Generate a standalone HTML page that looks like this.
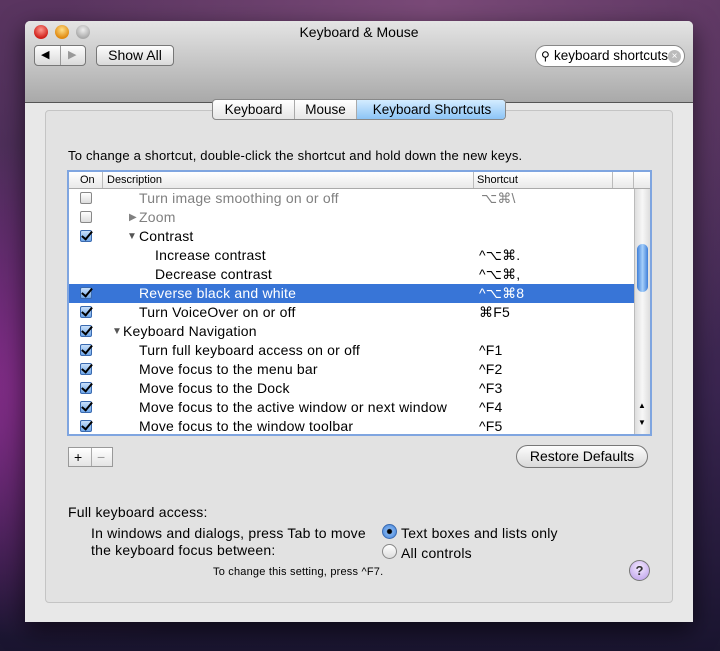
<!DOCTYPE html>
<html><head><meta charset="utf-8"><style>
*{margin:0;padding:0;box-sizing:border-box}
body{width:720px;height:651px;overflow:hidden;position:relative;font-family:"Liberation Sans",sans-serif;font-size:13px;color:#000;
background:radial-gradient(ellipse at 10% 60%,#8a2d8e 0%,transparent 45%),radial-gradient(ellipse at 60% 0%,#7a4a78 0%,transparent 60%),linear-gradient(180deg,#5a3560 0%,#3a2550 60%,#1a1530 100%);}
.a{position:absolute;white-space:nowrap}
.win{position:absolute;left:25px;top:21px;width:668px;height:601px;background:#e8e8e8;border-radius:5px 5px 0 0;box-shadow:0 8px 25px rgba(0,0,0,.6);overflow:hidden}
.tb{position:absolute;left:0;top:0;width:668px;height:82px;background:linear-gradient(#e4e4e4,#a9a9a9);border-bottom:1px solid #555}
.light{position:absolute;top:4px;width:14px;height:14px;border-radius:50%}
.btn{position:absolute;background:linear-gradient(#fdfdfd,#d9d9d9);border:1px solid #777;border-radius:4px;font-size:14px;text-align:center}
.group{position:absolute;left:20px;top:89px;width:628px;height:493px;border:1px solid #c4c4c4;border-radius:4px;background:#e2e2e2}
.table{position:absolute;left:67px;top:170px;width:585px;height:266px;border:2px solid #7fa5e0;background:#fff;overflow:hidden}
.hdr{position:absolute;left:0;top:0;width:581px;height:17px;background:linear-gradient(#fff,#e9e9e9);border-bottom:1px solid #aaa;font-size:11px}
.row{position:absolute;left:0;width:565px;height:19px;font-size:14px;letter-spacing:.2px}
.cb{position:absolute;left:11px;top:3px;width:12px;height:12px;border:1px solid #888;border-radius:2px;background:linear-gradient(#fff,#ddd)}
.cb.on{background:linear-gradient(#c9e0fa,#6fa6e8);border-color:#3a6ab0}
.cb.on::after{content:"";position:absolute;left:3px;top:-2px;width:4px;height:9px;border:solid #000;border-width:0 2px 2px 0;transform:rotate(40deg)}
.t{position:absolute;top:1px}
.s{position:absolute;left:410px;top:1px}
.bt{font-size:14px;letter-spacing:.2px}
</style></head><body>
<div class="win">
 <div class="tb">
  <div class="light" style="left:9px;background:radial-gradient(circle at 50% 35%,#ff9a90,#d0201a 70%)"></div>
  <div class="light" style="left:30px;background:radial-gradient(circle at 50% 35%,#ffe08a,#e08a10 70%)"></div>
  <div class="light" style="left:51px;background:radial-gradient(circle at 50% 35%,#eee,#aaa 70%)"></div>
  <div class="a" style="left:0;width:668px;text-align:center;top:3px;font-size:14px">Keyboard &amp; Mouse</div>
  <div class="btn" style="left:9px;top:24px;width:52px;height:21px"><span class="a" style="left:6px;top:2px;font-size:11px">◀</span><span style="position:absolute;left:25px;top:0;height:19px;border-left:1px solid #999"></span><span class="a" style="left:33px;top:2px;font-size:11px;color:#999">▶</span></div>
  <div class="btn" style="left:71px;top:24px;width:78px;height:21px;line-height:19px">Show All</div>
  <div class="a" style="left:510px;top:24px;width:150px;height:22px;background:#fff;border:1px solid #888;border-radius:11px;font-size:13.5px;line-height:20px;padding-left:18px">keyboard shortcuts
   <span class="a" style="left:5px;top:0;font-size:12px">⚲</span>
   <span class="a" style="left:132px;top:4px;width:13px;height:13px;border-radius:50%;background:#bbb;color:#fff;font-size:10px;line-height:13px;text-align:center">×</span></div>
 </div>
 <div class="group"></div>
 <div class="a" style="left:187px;top:78px;width:294px;height:21px;border:1px solid #888;border-radius:4px;background:linear-gradient(#fff,#e6e6e6);font-size:13.5px;line-height:19px;overflow:hidden">
  <span class="a" style="left:0;width:82px;text-align:center;border-right:1px solid #aaa;height:19px">Keyboard</span>
  <span class="a" style="left:82px;width:62px;text-align:center;border-right:1px solid #aaa;height:19px">Mouse</span>
  <span class="a" style="left:144px;width:150px;text-align:center;height:19px;background:linear-gradient(#d4ecff,#8cc4f6)">Keyboard Shortcuts</span>
 </div>
</div>
<div class="a" style="left:68px;top:148px;font-size:13px;letter-spacing:.2px">To change a shortcut, double-click the shortcut and hold down the new keys.</div>
<div class="table">
 <div class="hdr"><span class="a" style="left:11px;top:2px">On</span><span class="a" style="left:33px;top:0;height:16px;border-left:1px solid #bbb"></span><span class="a" style="left:38px;top:2px">Description</span><span class="a" style="left:404px;top:0;height:16px;border-left:1px solid #bbb"></span><span class="a" style="left:408px;top:2px">Shortcut</span><span class="a" style="left:543px;top:0;height:16px;border-left:1px solid #bbb"></span><span class="a" style="left:564px;top:0;height:16px;border-left:1px solid #bbb"></span></div>
 <div class="row" style="top:17px;color:#808080"><div class="cb"></div><span class="t" style="left:70px">Turn image smoothing on or off</span><span class="s" style="left:412px">⌥⌘\</span></div>
 <div class="row" style="top:36px;color:#808080"><div class="cb"></div><span class="t" style="left:60px;font-size:10px;top:4px">▶</span><span class="t" style="left:70px">Zoom</span></div>
 <div class="row" style="top:55px"><div class="cb on"></div><span class="t" style="left:58px;font-size:10px;top:4px;color:#555">▼</span><span class="t" style="left:70px">Contrast</span></div>
 <div class="row" style="top:74px"><span class="t" style="left:86px">Increase contrast</span><span class="s">^⌥⌘.</span></div>
 <div class="row" style="top:93px"><span class="t" style="left:86px">Decrease contrast</span><span class="s">^⌥⌘,</span></div>
 <div class="row" style="top:112px;background:#3875d7;color:#fff;width:566px"><div class="cb on"></div><span class="t" style="left:70px">Reverse black and white</span><span class="s">^⌥⌘8</span></div>
 <div class="row" style="top:131px"><div class="cb on"></div><span class="t" style="left:70px">Turn VoiceOver on or off</span><span class="s">⌘F5</span></div>
 <div class="row" style="top:150px"><div class="cb on"></div><span class="t" style="left:43px;font-size:10px;top:4px;color:#555">▼</span><span class="t" style="left:54px">Keyboard Navigation</span></div>
 <div class="row" style="top:169px"><div class="cb on"></div><span class="t" style="left:70px">Turn full keyboard access on or off</span><span class="s">^F1</span></div>
 <div class="row" style="top:188px"><div class="cb on"></div><span class="t" style="left:70px">Move focus to the menu bar</span><span class="s">^F2</span></div>
 <div class="row" style="top:207px"><div class="cb on"></div><span class="t" style="left:70px">Move focus to the Dock</span><span class="s">^F3</span></div>
 <div class="row" style="top:226px"><div class="cb on"></div><span class="t" style="left:70px">Move focus to the active window or next window</span><span class="s">^F4</span></div>
 <div class="row" style="top:245px"><div class="cb on"></div><span class="t" style="left:70px">Move focus to the window toolbar</span><span class="s">^F5</span></div>
 <div class="a" style="left:565px;top:17px;width:16px;height:245px;background:linear-gradient(90deg,#ddd,#f7f7f7,#ddd);border-left:1px solid #bbb">
  <div class="a" style="left:2px;top:55px;width:11px;height:48px;border-radius:6px;background:linear-gradient(90deg,#3f7fd8,#a6d0fb,#3f7fd8)"></div>
  <div class="a" style="left:3px;top:212px;font-size:8px">▲</div><div class="a" style="left:3px;top:229px;font-size:8px">▼</div>
 </div>
</div>
<div class="a" style="left:68px;top:447px;width:45px;height:20px;border:1px solid #999;background:linear-gradient(#fff,#e4e4e4);font-size:14px;line-height:18px"><span class="a" style="left:5px">+</span><span class="a" style="left:22px;top:0;height:18px;border-left:1px solid #aaa"></span><span class="a" style="left:28px;color:#999">−</span></div>
<div class="btn" style="left:516px;top:445px;width:132px;height:23px;border-radius:12px;line-height:21px">Restore Defaults</div>
<div class="a bt" style="left:68px;top:504px">Full keyboard access:</div>
<div class="a bt" style="left:91px;top:525px">In windows and dialogs, press Tab to move</div>
<div class="a bt" style="left:91px;top:542px">the keyboard focus between:</div>
<div class="a" style="left:382px;top:524px;width:15px;height:15px;border-radius:50%;border:1px solid #3a6ab0;background:radial-gradient(circle,#000 2px,#7fb1ee 3px,#3f7fd8)"></div>
<div class="a bt" style="left:401px;top:525px">Text boxes and lists only</div>
<div class="a" style="left:382px;top:544px;width:15px;height:15px;border-radius:50%;border:1px solid #888;background:linear-gradient(#fff,#ddd)"></div>
<div class="a bt" style="left:401px;top:545px">All controls</div>
<div class="a" style="left:213px;top:566px;font-size:11px;letter-spacing:.2px">To change this setting, press ^F7.</div>
<div class="a" style="left:629px;top:560px;width:21px;height:21px;border-radius:50%;border:1px solid #777;background:radial-gradient(circle at 50% 35%,#f4eaff,#b89ae8);text-align:center;font-weight:bold;font-size:13px;line-height:19px;color:#333">?</div>
</body></html>
